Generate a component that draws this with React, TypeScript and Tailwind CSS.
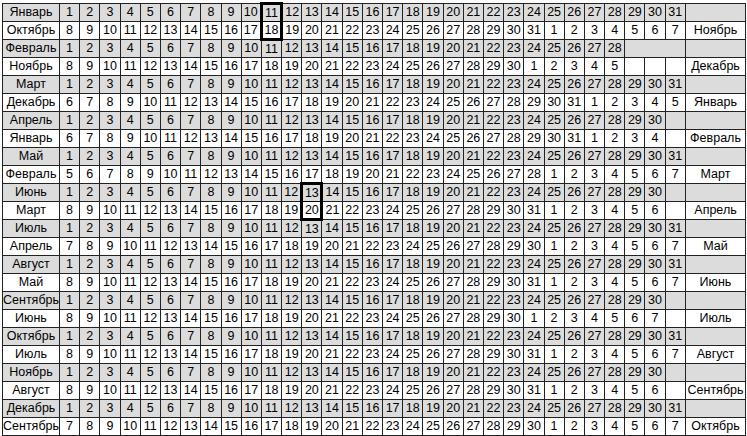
import React from 'react'

const gray = [
  { name: 'Январь', days: 31 },
  { name: 'Февраль', days: 28 },
  { name: 'Март', days: 31 },
  { name: 'Апрель', days: 30 },
  { name: 'Май', days: 31 },
  { name: 'Июнь', days: 30 },
  { name: 'Июль', days: 31 },
  { name: 'Август', days: 31 },
  { name: 'Сентябрь', days: 30 },
  { name: 'Октябрь', days: 31 },
  { name: 'Ноябрь', days: 30 },
  { name: 'Декабрь', days: 31 },
]

// due month label, first day, days in that month, next month label
const white = [
  { name: 'Октябрь', start: 8, len: 31, next: 'Ноябрь' },
  { name: 'Ноябрь', start: 8, len: 30, next: 'Декабрь' },
  { name: 'Декабрь', start: 6, len: 31, next: 'Январь' },
  { name: 'Январь', start: 6, len: 31, next: 'Февраль' },
  { name: 'Февраль', start: 5, len: 28, next: 'Март' },
  { name: 'Март', start: 8, len: 31, next: 'Апрель' },
  { name: 'Апрель', start: 7, len: 30, next: 'Май' },
  { name: 'Май', start: 8, len: 31, next: 'Июнь' },
  { name: 'Июнь', start: 8, len: 30, next: 'Июль' },
  { name: 'Июль', start: 8, len: 31, next: 'Август' },
  { name: 'Август', start: 8, len: 31, next: 'Сентябрь' },
  { name: 'Сентябрь', start: 7, len: 30, next: 'Октябрь' },
]

// [pair index, column] with a bold frame round both cells
const marks: Record<number, number> = { 0: 11, 5: 13 }

const cell = 'border border-[#222] h-[18px] p-0 text-center leading-none whitespace-nowrap overflow-hidden'

export default function App() {
  return (
    <div className="bg-white w-[747px] h-[436px] pt-[2px] pl-[2px]" style={{ fontFamily: '"Liberation Sans", Arial, sans-serif' }}>
      <table className="table-fixed border-collapse w-[744px] text-[12.5px] text-black">
        <colgroup>
          <col className="w-[57px]" />
          {Array.from({ length: 31 }, (_, i) => <col key={i} />)}
          <col className="w-[60px]" />
        </colgroup>
        <tbody>
          {gray.map((g, p) => {
            const w = white[p]
            const mark = marks[p]
            const values = Array.from({ length: g.days }, (_, i) => {
              const v = w.start + i
              return v > w.len ? v - w.len : v
            })
            return (
              <React.Fragment key={g.name}>
                <tr className="bg-[#dcdcdc]">
                  <td className={cell}>{g.name}</td>
                  {Array.from({ length: g.days }, (_, i) => (
                    <td key={i} className={cell + (mark === i + 1 ? ' border-x-[3px] border-t-[3px] border-black' : '')}>{i + 1}</td>
                  ))}
                  {g.days < 31 && <td colSpan={31 - g.days} className={cell}></td>}
                  <td className={cell}></td>
                </tr>
                <tr className="bg-white">
                  <td className={cell}>{w.name}</td>
                  {Array.from({ length: 31 }, (_, i) => (
                    <td key={i} className={cell + (mark === i + 1 ? ' border-x-[3px] border-b-[3px] border-black' : '')}>{values[i] ?? ''}</td>
                  ))}
                  <td className={cell}>{w.next}</td>
                </tr>
              </React.Fragment>
            )
          })}
        </tbody>
      </table>
    </div>
  )
}
